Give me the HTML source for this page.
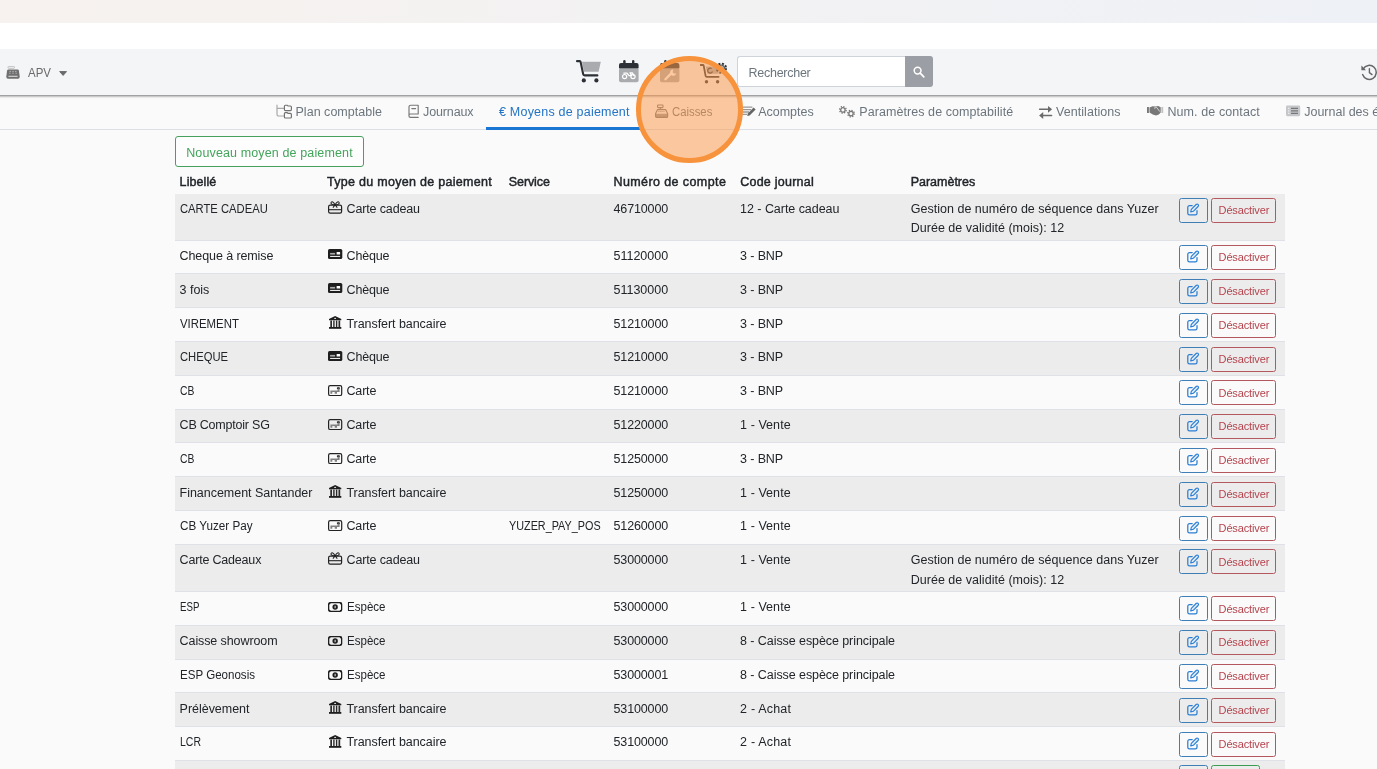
<!DOCTYPE html>
<html lang="fr">
<head>
<meta charset="utf-8">
<title>Moyens de paiement</title>
<style>
*{box-sizing:border-box;margin:0;padding:0}
html,body{width:1377px;height:769px;overflow:hidden}
body{position:relative;will-change:opacity;background:#fafafa;font-family:"Liberation Sans",Arial,sans-serif;font-size:12.5px;color:#212529;line-height:19.5px}
.abs{position:absolute}
#topstrip{position:absolute;left:0;top:0;width:1377px;height:23px;background:linear-gradient(90deg,#f7f2ef 0%,#f3f2f2 45%,#eef1f6 100%)}
#white{position:absolute;left:0;top:23px;width:1377px;height:26px;background:#fff;z-index:3}
#nav{position:absolute;left:-20px;top:49px;width:1417px;height:46px;background:rgba(244,245,247,.996);box-shadow:0 1px 2.5px rgba(0,0,0,.55);z-index:2}
#tabs{position:absolute;left:0;top:96px;width:1377px;height:34px;border-bottom:1px solid #dcdfe6}
.tab{position:absolute;top:6.8px;height:19.5px;white-space:nowrap;color:#6c757d;font-size:12.5px}
.tab svg{position:absolute;top:0;left:0;overflow:visible}
.t{display:inline-block;white-space:nowrap;transform-origin:0 50%}
#newbtn{position:absolute;left:175px;top:136px;width:189px;height:31px;border:1px solid #48a05f;border-radius:3px;color:#44a45c;background:rgba(252,253,252,.996);line-height:29px}
#newbtn .t{position:absolute;left:10.2px;top:1.5px}
.th{position:absolute;top:172.7px;font-weight:normal;-webkit-text-stroke:.45px #212529;white-space:nowrap;color:#212529}
.row{position:absolute;left:175px;width:1110px;border-top:1px solid #dee2e6;background-clip:padding-box}
.row.first{border-top-color:transparent}
.row.odd{background-color:rgba(236,236,236,.996)}
.c{position:absolute;top:6.4px;white-space:nowrap}
.first .c{top:5.8px}.first .be,.first .bd{top:3.9px}
.c1{left:4.6px}.c2{left:152px}.c3{left:333.7px}.c4{left:438.5px}.c5{left:565.1px}.c6{left:735.7px}
.c2 .t{position:absolute;left:19.5px;top:0}
.ti{position:absolute;left:.9px;top:2px;width:16px;height:16px;overflow:visible}
.ti-gift{top:1.1px}.ti-cheque{top:2.4px}.ti-bank{top:1.8px;left:1.8px}.ti-card{top:3px}.ti-cash{top:3.8px}
.be{position:absolute;left:1004px;top:4.5px;width:29px;height:25px;border:1px solid #3f7fb6;border-radius:2.5px}
.be svg{position:absolute;left:7.2px;top:5.2px;width:12px;height:12px;overflow:visible}
.bd{position:absolute;left:1036.2px;top:4.5px;width:64.8px;height:25px;border:1px solid #b4585f;border-radius:2.5px;color:#b5434d;font-size:11px;line-height:23px}
.bd .t{position:absolute;left:6.4px;top:0.3px}
.ba{position:absolute;left:1036.2px;top:4.5px;width:48.5px;height:25px;border:1px solid #3b9b52;border-radius:2.5px;color:#36a04f;font-size:11.3px;line-height:23px}
.ba .t{position:absolute;left:6.8px;top:0.3px}
#circle{z-index:5;position:absolute;left:636px;top:56px;width:106.6px;height:106.6px;border-radius:50%;background:rgba(252,152,72,.52);border:5px solid #f7933c}
</style>
</head>
<body>
<svg width="0" height="0" style="position:absolute">
<defs>
<symbol id="i-gift" viewBox="0 0 16 16" overflow="visible">
 <rect x="0.6" y="4.1" width="13" height="8" rx="1.6" fill="none" stroke="#222" stroke-width="1.2"/>
 <path d="M0.6 8.7H13.6" stroke="#222" stroke-width="1.1" fill="none"/>
 <path d="M7.1 3.9C5.8 .6 3.4 -.1 3 1.8C2.8 3.2 4.6 3.9 7.1 3.9C9.6 3.9 11.4 3.2 11.2 1.8C10.8 -.1 8.4 .6 7.1 3.9ZM7.1 3.9L4.9 6.6M7.1 3.9L9.3 6.6" stroke="#222" stroke-width="1.05" fill="none" stroke-linejoin="round"/>
</symbol>
<symbol id="i-cheque" viewBox="0 0 16 16" overflow="visible">
 <rect x="0" y="0" width="14.3" height="10" rx="1.6" fill="#1e1e1e"/>
 <rect x="8.6" y="2.9" width="3.5" height="2.7" rx=".4" fill="#fff"/>
 <rect x="2.1" y="3.9" width="5" height="1.7" fill="#aaa"/>
 <rect x="2.1" y="6.9" width="10" height="1" fill="#fff"/>
</symbol>
<symbol id="i-bank" viewBox="0 0 16 16" overflow="visible">
 <path d="M6.1 0L12.3 3.1V4.2H0V3.1Z" fill="#1e1e1e"/>
 <ellipse cx="6.1" cy="2.4" rx="1" ry=".6" fill="#ddd"/>
 <path d="M1.3 4.5h1.7v6.6H1.3zM4.2 4.5h1.4v6.6H4.2zM6.9 4.5h1.4v6.6H6.9zM9.5 4.5h1.7v6.6H9.5z" fill="#2a2a2a"/>
 <rect x="0" y="11" width="12.3" height="1.8" fill="#1e1e1e"/>
</symbol>
<symbol id="i-card" viewBox="0 0 16 16" overflow="visible">
 <rect x=".6" y=".6" width="13.1" height="9.9" rx="1.6" fill="none" stroke="#222" stroke-width="1.2"/>
 <rect x="8.9" y="2.3" width="3" height="2" rx=".8" fill="#222"/>
 <path d="M2.4 5.4H9.6V3.5H11.6V6.9H9V8.7H6.7V6.9H4.3V8.7H2.4Z" fill="#808080"/>
</symbol>
<symbol id="i-cash" viewBox="0 0 16 16" overflow="visible">
 <rect x=".65" y=".65" width="13" height="8.7" rx="1.5" fill="none" stroke="#1e1e1e" stroke-width="1.3"/>
 <path d="M.7 2.6A2 2 0 0 0 2.7.7H.7zM13.6 2.6A2 2 0 0 1 11.6.7H13.6zM.7 7.4A2 2 0 0 1 2.7 9.3H.7zM13.6 7.4A2 2 0 0 0 11.6 9.3H13.6z" fill="#1e1e1e"/>
 <circle cx="7.15" cy="5" r="2.7" fill="#1e1e1e"/>
 <rect x="6.5" y="3.8" width="1.3" height="2.4" fill="#bbb"/>
</symbol>
<symbol id="i-edit" viewBox="0 0 12 12" overflow="visible">
 <path d="M5.2 1.6H2.4A1.6 1.6 0 0 0 .8 3.2V9.2A1.6 1.6 0 0 0 2.4 10.8H8.4A1.6 1.6 0 0 0 10 9.2V6.6" fill="none" stroke="#2b7ed3" stroke-width="1.25" stroke-linecap="round"/>
 <path d="M9.1.5L4.3 5.3L3.7 7.9L6.3 7.3L11.1 2.5A1.4 1.4 0 0 0 9.1.5Z" fill="#dcebfa" stroke="#2b7ed3" stroke-width="1.1" stroke-linejoin="round"/>
</symbol>
</defs>
</svg>
<div id="topstrip"></div>
<div id="white"></div>
<div id="tabs">
 <div class="tab" style="left:276px;padding-left:19.5px"><svg width="17" height="16" viewBox="0 0 17 16" style="top:1px"><path d="M1 1.2V10.4A1.6 1.6 0 0 0 2.6 12H7.6M1 4.4H7.6" fill="none" stroke="#a8a8a8" stroke-width="1.2" stroke-linecap="round"/><path d="M8.4 2.2A1 1 0 0 1 9.4 1.2H11.2L12 2H14.4A1 1 0 0 1 15.4 3V5.6A1 1 0 0 1 14.4 6.6H9.4A1 1 0 0 1 8.4 5.6Z" fill="none" stroke="#707070" stroke-width="1.15"/><path d="M8.4 9.6A1 1 0 0 1 9.4 8.6H11.2L12 9.4H14.4A1 1 0 0 1 15.4 10.4V13A1 1 0 0 1 14.4 14H9.4A1 1 0 0 1 8.4 13Z" fill="none" stroke="#707070" stroke-width="1.15"/></svg><span class="t" style="letter-spacing:0.023px">Plan comptable</span></div>
 <div class="tab" style="left:408px;padding-left:15px"><svg width="13" height="16" viewBox="0 0 13 16" style="top:1px"><path d="M1 11.6V3A1.8 1.8 0 0 1 2.8 1.2H10.2V10H2.6A1.6 1.6 0 0 0 2.6 13.4H10.2M3.8 4.6H7.6" fill="none" stroke="#777" stroke-width="1.15" stroke-linecap="round" stroke-linejoin="round"/></svg><span class="t" style="letter-spacing:-0.117px">Journaux</span></div>
 <div class="tab" style="left:499px;color:#2374c6"><span class="t" style="letter-spacing:0.212px">€ Moyens de paiement</span></div>
 <div class="tab" style="left:654.7px;padding-left:17.2px"><svg width="15" height="16" viewBox="0 0 15 16" style="top:1px"><rect x="2.6" y="1" width="5.4" height="2.6" rx=".6" fill="none" stroke="#777" stroke-width="1.1"/><path d="M5.3 3.6V5.4" stroke="#777" stroke-width="1.1"/><path d="M2.6 5.6H10.6L12.6 9.6V12.4A1 1 0 0 1 11.6 13.4H1.6A1 1 0 0 1 .6 12.4V9.6Z" fill="none" stroke="#777" stroke-width="1.15" stroke-linejoin="round"/><path d="M.8 9.8H12.4V12.4A.8.8 0 0 1 11.6 13.2H1.6A.8.8 0 0 1 .8 12.4Z" fill="#777" opacity=".75"/><path d="M3.4 7.6H9.8" stroke="#777" stroke-width="1" stroke-dasharray="1 1"/></svg><span class="t" style="transform:scaleX(0.9063)">Caisses</span></div>
 <div class="tab" style="left:741px;padding-left:17.2px"><svg width="16" height="16" viewBox="0 0 16 16" style="top:1px"><path d="M1 3.2H11.4M1 5.6H10M1 8H8M1 10.4H6" stroke="#999" stroke-width="1.3" fill="none"/><path d="M12.6 3.4L14.6 5.4L8.6 11.4L6.2 12L6.8 9.4Z" fill="#666"/></svg><span class="t" style="letter-spacing:-0.012px">Acomptes</span></div>
 <div class="tab" style="left:839px;padding-left:20.3px"><svg width="17" height="16" viewBox="0 0 17 16" style="top:0px"><circle cx="3.9" cy="6.9" r="3.3" fill="none" stroke="#777" stroke-width="1.3" stroke-dasharray="1.3 1.29"/><circle cx="3.9" cy="6.9" r="2.2" fill="none" stroke="#777" stroke-width="1.3"/><circle cx="12" cy="10.6" r="3.3" fill="none" stroke="#777" stroke-width="1.3" stroke-dasharray="1.3 1.29"/><circle cx="12" cy="10.6" r="2.2" fill="none" stroke="#777" stroke-width="1.3"/></svg><span class="t" style="letter-spacing:0.067px">Paramètres de comptabilité</span></div>
 <div class="tab" style="left:1038.8px;padding-left:17.2px"><svg width="14" height="16" viewBox="0 0 14 16" style="top:1px"><path d="M.6 5.3H9.6M12.6 11.5H3.6" fill="none" stroke="#6b6b6b" stroke-width="1.5" stroke-linecap="round"/><path d="M9 1.9L13.1 5.3L9 8.7ZM4.2 8.1L.1 11.5L4.2 14.9Z" fill="#6b6b6b"/></svg><span class="t" style="letter-spacing:0.064px">Ventilations</span></div>
 <div class="tab" style="left:1146.9px;padding-left:20.5px"><svg width="17" height="16" viewBox="0 0 17 16" style="top:1px"><rect x="0" y="3" width="1.9" height="6" fill="#777"/><rect x="14.3" y="3" width="1.9" height="6" fill="#c2c2c2"/><path d="M2.5 3.4L5.6 2.2L8.4 2.4L11.2 2L13.7 3.2V8.4L11.8 10.4L9 11.4L5.8 10.6L2.5 8.4Z" fill="#777"/><path d="M7 4.2L9.6 3.4L12.8 7.6" stroke="#ddd" stroke-width=".9" fill="none"/></svg><span class="t" style="letter-spacing:0.099px">Num. de contact</span></div>
 <div class="tab" style="left:1286px;padding-left:18.2px"><svg width="15" height="16" viewBox="0 0 15 16" style="top:1px"><rect x="0" y="1.6" width="14.2" height="10.6" rx="1.4" fill="#c4c6c9"/><path d="M2 4.4H3.4M2 6.9H3.4M2 9.4H3.4" stroke="#eee" stroke-width="1.2"/><path d="M5 4.4H12M5 6.9H12M5 9.4H12" stroke="#777" stroke-width="1.2"/></svg><span class="t">Journal des écritures</span></div>
 <div style="position:absolute;left:486px;top:31px;width:156px;height:3.4px;background:#1976d2"></div>
</div>
<div id="nav">
 <svg class="abs" style="left:26.0px;top:17px" width="14" height="13" viewBox="0 0 14 13"><rect x="2" y=".4" width="6.4" height="1.9" rx=".6" fill="none" stroke="#b5b5b5" stroke-width=".8"/><path d="M2.4 3.4H11.6Q12.6 3.4 12.9 4.4L13.7 10.8Q13.8 12.8 12 12.8H2Q.2 12.8 .3 10.8L1.1 4.4Q1.4 3.4 2.4 3.4Z" fill="#6f6f6f"/><path d="M3.6 5.4H4.8M6.4 5.4H7.6M9.2 5.4H10.4M3.3 7.2H4.5M6.4 7.2H7.6M9.5 7.2H10.7" stroke="#c9c9c9" stroke-width=".9"/><path d="M2.4 10.3H11.6" stroke="#d8d8d8" stroke-width="1.1"/></svg>
 <div class="abs" style="left:48.0px;top:15.1px;color:#6a6a6a;font-size:12.5px;white-space:nowrap"><span class="t" style="transform:scaleX(0.9194)">APV</span></div>
 <svg class="abs" style="left:79.0px;top:21.5px" width="9" height="6" viewBox="0 0 9 6"><path d="M.7.6H7.5L4.1 4.4Z" fill="#6a6a6a" stroke="#6a6a6a" stroke-width="1" stroke-linejoin="round"/></svg>
 <!-- cart -->
 <svg class="abs" style="left:596.0px;top:10.6px" width="26" height="23" viewBox="0 0 26 23"><path d="M6 1.8H24.8L22.6 11.8H8Z" fill="#a9abae"/><path d="M1 1.1H3.6A1 1 0 0 1 4.6 1.9L7.2 14.2A1.4 1.4 0 0 0 8.6 15.4H21.4" fill="none" stroke="#2c3036" stroke-width="2.1" stroke-linecap="round" stroke-linejoin="round"/><circle cx="7.8" cy="20.4" r="2.1" fill="#2c3036"/><circle cx="20.4" cy="20.4" r="2.1" fill="#2c3036"/></svg>
 <!-- calendar moto -->
 <svg class="abs" style="left:639.0px;top:10.8px" width="20" height="23" viewBox="0 0 20 23"><rect x="0" y="7.8" width="19.6" height="14.4" rx="2" fill="#a9abae"/><path d="M2 3H17.6A2 2 0 0 1 19.6 5V8.2H0V5A2 2 0 0 1 2 3Z" fill="#2c3036"/><rect x="4.2" y="0" width="2.4" height="5" rx="1.2" fill="#2c3036"/><rect x="13" y="0" width="2.4" height="5" rx="1.2" fill="#2c3036"/><circle cx="5.6" cy="16.6" r="2.1" fill="none" stroke="#fff" stroke-width="1.2"/><circle cx="14" cy="16.6" r="2.1" fill="none" stroke="#fff" stroke-width="1.2"/><path d="M4.4 13.2H8L10 15.6H12.6L11 12.8H13.4L15 16" fill="none" stroke="#fff" stroke-width="1.3" stroke-linejoin="round"/></svg>
 <!-- calendar wrench -->
 <svg class="abs" style="left:680.2px;top:10.8px" width="20" height="23" viewBox="0 0 20 23"><rect x="0" y="7.8" width="19.4" height="14.4" rx="2" fill="#a9abae"/><path d="M2 3H17.4A2 2 0 0 1 19.4 5V8.2H0V5A2 2 0 0 1 2 3Z" fill="#2c3036"/><rect x="4.2" y="0" width="2.4" height="5" rx="1.2" fill="#2c3036"/><rect x="12.8" y="0" width="2.4" height="5" rx="1.2" fill="#2c3036"/><path d="M5.4 19.2L11 13.6" stroke="#fff" stroke-width="2.3" stroke-linecap="round"/><path d="M13.4 9.6A3.1 3.1 0 1 0 16.2 13.4L14 13.6L12.6 12.2Z" fill="#fff"/></svg>
 <!-- cart gear -->
 <svg class="abs" style="left:720.0px;top:13px" width="28" height="22" viewBox="0 0 28 22"><path d="M5.8 4.4H19.8L18.4 11.8H7.4Z" fill="#a9abae"/><path d="M.7 3H2.8A.9.9 0 0 1 3.7 3.7L5.6 13.8A1.2 1.2 0 0 0 6.8 14.8H18.6" fill="none" stroke="#2c3036" stroke-width="1.8" stroke-linecap="round" stroke-linejoin="round"/><circle cx="6.5" cy="19.8" r="1.7" fill="#2c3036"/><circle cx="17.6" cy="19.8" r="1.7" fill="#2c3036"/><circle cx="10.2" cy="8.6" r="2.5" fill="none" stroke="#2c3036" stroke-width="1.2" stroke-dasharray="12 2.4" stroke-dashoffset="-1"/><circle cx="21.4" cy="6.2" r="4.6" fill="none" stroke="#2c3036" stroke-width="2" stroke-dasharray="2 1.61"/><circle cx="21.4" cy="6.2" r="3.2" fill="#a9abae" stroke="#2c3036" stroke-width=".8"/></svg>
 <!-- search -->
 <div class="abs" style="left:757.3px;top:7.3px;width:168.4px;height:30.4px;background:rgba(255,255,255,.996);border:1px solid #ced4da;border-right:0;border-radius:3px 0 0 3px"></div>
 <div class="abs" style="left:768.5px;top:15.4px;color:#6c757d;white-space:nowrap"><span class="t" style="letter-spacing:-0.263px">Rechercher</span></div>
 <div class="abs" style="left:925.3px;top:7.3px;width:27.3px;height:30.4px;background:#9b9ea4;border-radius:0 3px 3px 0"></div>
 <svg class="abs" style="left:933.2px;top:17px" width="12" height="12" viewBox="0 0 12 12"><circle cx="4.6" cy="4.6" r="3.4" fill="none" stroke="#fff" stroke-width="1.5"/><path d="M7.2 7.2L10.8 10.8" stroke="#fff" stroke-width="1.7" stroke-linecap="round"/></svg>
 <!-- history -->
 <svg class="abs" style="left:1380.6px;top:14.6px" width="18" height="18" viewBox="0 0 18 18"><path d="M2.2 4.8A7 7 0 1 1 1.6 10.6" fill="none" stroke="#666" stroke-width="1.5" stroke-linecap="round"/><path d="M.4 1.6V6.2H5Z" fill="#666"/><path d="M8.4 4.6V8.6L11 10.6" fill="none" stroke="#666" stroke-width="1.4" stroke-linecap="round"/></svg>
</div>
<div id="newbtn"><span class="t" style="letter-spacing:0.131px">Nouveau moyen de paiement</span></div>
<div class="th" style="left:179.6px"><span class="t" style="letter-spacing:0.080px">Libellé</span></div>
<div class="th" style="left:327px"><span class="t" style="letter-spacing:0.290px">Type du moyen de paiement</span></div>
<div class="th" style="left:508.8px"><span class="t" style="letter-spacing:-0.098px">Service</span></div>
<div class="th" style="left:613.5px"><span class="t" style="letter-spacing:0.405px">Numéro de compte</span></div>
<div class="th" style="left:740.2px"><span class="t" style="letter-spacing:0.242px">Code journal</span></div>
<div class="th" style="left:910.7px"><span class="t" style="letter-spacing:-0.011px">Paramètres</span></div>
<div class="row odd first" style="top:193.10px;height:47.00px"><div class="c c1"><span class="t" style="transform:scaleX(0.8985)">CARTE CADEAU</span></div><div class="c c2"><svg class="ti ti-gift"><use href="#i-gift"/></svg><span class="t" style="letter-spacing:-0.139px">Carte cadeau</span></div><div class="c c4"><span class="t" style="letter-spacing:-0.128px">46710000</span></div><div class="c c5"><span class="t" style="letter-spacing:-0.045px">12 - Carte cadeau</span></div><div class="c c6"><span class="t" style="letter-spacing:0.023px">Gestion de numéro de séquence dans Yuzer</span><br><span class="t" style="letter-spacing:0.026px">Durée de validité (mois): 12</span></div><div class="be"><svg><use href="#i-edit"/></svg></div><div class="bd"><span class="t" style="letter-spacing:-0.137px">Désactiver</span></div></div>
<div class="row" style="top:239.60px;height:34.30px"><div class="c c1"><span class="t" style="letter-spacing:-0.100px">Cheque à remise</span></div><div class="c c2"><svg class="ti ti-cheque"><use href="#i-cheque"/></svg><span class="t" style="letter-spacing:-0.149px">Chèque</span></div><div class="c c4"><span class="t" style="letter-spacing:-0.011px">51120000</span></div><div class="c c5"><span class="t" style="letter-spacing:-0.124px">3 - BNP</span></div><div class="be"><svg><use href="#i-edit"/></svg></div><div class="bd"><span class="t" style="letter-spacing:-0.137px">Désactiver</span></div></div>
<div class="row odd" style="top:273.40px;height:34.30px"><div class="c c1"><span class="t" style="letter-spacing:-0.032px">3 fois</span></div><div class="c c2"><svg class="ti ti-cheque"><use href="#i-cheque"/></svg><span class="t" style="letter-spacing:-0.149px">Chèque</span></div><div class="c c4"><span class="t" style="letter-spacing:-0.011px">51130000</span></div><div class="c c5"><span class="t" style="letter-spacing:-0.124px">3 - BNP</span></div><div class="be"><svg><use href="#i-edit"/></svg></div><div class="bd"><span class="t" style="letter-spacing:-0.137px">Désactiver</span></div></div>
<div class="row" style="top:307.20px;height:34.30px"><div class="c c1"><span class="t" style="transform:scaleX(0.9119)">VIREMENT</span></div><div class="c c2"><svg class="ti ti-bank"><use href="#i-bank"/></svg><span class="t" style="letter-spacing:-0.060px">Transfert bancaire</span></div><div class="c c4"><span class="t" style="letter-spacing:-0.128px">51210000</span></div><div class="c c5"><span class="t" style="letter-spacing:-0.124px">3 - BNP</span></div><div class="be"><svg><use href="#i-edit"/></svg></div><div class="bd"><span class="t" style="letter-spacing:-0.137px">Désactiver</span></div></div>
<div class="row odd" style="top:341.00px;height:34.30px"><div class="c c1"><span class="t" style="transform:scaleX(0.8975)">CHEQUE</span></div><div class="c c2"><svg class="ti ti-cheque"><use href="#i-cheque"/></svg><span class="t" style="letter-spacing:-0.149px">Chèque</span></div><div class="c c4"><span class="t" style="letter-spacing:-0.128px">51210000</span></div><div class="c c5"><span class="t" style="letter-spacing:-0.124px">3 - BNP</span></div><div class="be"><svg><use href="#i-edit"/></svg></div><div class="bd"><span class="t" style="letter-spacing:-0.137px">Désactiver</span></div></div>
<div class="row" style="top:374.80px;height:34.30px"><div class="c c1"><span class="t" style="transform:scaleX(0.8288)">CB</span></div><div class="c c2"><svg class="ti ti-card"><use href="#i-card"/></svg><span class="t" style="letter-spacing:-0.176px">Carte</span></div><div class="c c4"><span class="t" style="letter-spacing:-0.128px">51210000</span></div><div class="c c5"><span class="t" style="letter-spacing:-0.124px">3 - BNP</span></div><div class="be"><svg><use href="#i-edit"/></svg></div><div class="bd"><span class="t" style="letter-spacing:-0.137px">Désactiver</span></div></div>
<div class="row odd" style="top:408.60px;height:34.30px"><div class="c c1"><span class="t" style="letter-spacing:-0.214px">CB Comptoir SG</span></div><div class="c c2"><svg class="ti ti-card"><use href="#i-card"/></svg><span class="t" style="letter-spacing:-0.176px">Carte</span></div><div class="c c4"><span class="t" style="letter-spacing:-0.128px">51220000</span></div><div class="c c5"><span class="t" style="letter-spacing:0.061px">1 - Vente</span></div><div class="be"><svg><use href="#i-edit"/></svg></div><div class="bd"><span class="t" style="letter-spacing:-0.137px">Désactiver</span></div></div>
<div class="row" style="top:442.40px;height:34.30px"><div class="c c1"><span class="t" style="transform:scaleX(0.8288)">CB</span></div><div class="c c2"><svg class="ti ti-card"><use href="#i-card"/></svg><span class="t" style="letter-spacing:-0.176px">Carte</span></div><div class="c c4"><span class="t" style="letter-spacing:-0.128px">51250000</span></div><div class="c c5"><span class="t" style="letter-spacing:-0.124px">3 - BNP</span></div><div class="be"><svg><use href="#i-edit"/></svg></div><div class="bd"><span class="t" style="letter-spacing:-0.137px">Désactiver</span></div></div>
<div class="row odd" style="top:476.20px;height:34.30px"><div class="c c1"><span class="t" style="letter-spacing:-0.030px">Financement Santander</span></div><div class="c c2"><svg class="ti ti-bank"><use href="#i-bank"/></svg><span class="t" style="letter-spacing:-0.060px">Transfert bancaire</span></div><div class="c c4"><span class="t" style="letter-spacing:-0.128px">51250000</span></div><div class="c c5"><span class="t" style="letter-spacing:0.061px">1 - Vente</span></div><div class="be"><svg><use href="#i-edit"/></svg></div><div class="bd"><span class="t" style="letter-spacing:-0.137px">Désactiver</span></div></div>
<div class="row" style="top:510.00px;height:34.30px"><div class="c c1"><span class="t" style="transform:scaleX(0.9356)">CB Yuzer Pay</span></div><div class="c c2"><svg class="ti ti-card"><use href="#i-card"/></svg><span class="t" style="letter-spacing:-0.176px">Carte</span></div><div class="c c3"><span class="t" style="transform:scaleX(0.8656)">YUZER_PAY_POS</span></div><div class="c c4"><span class="t" style="letter-spacing:-0.128px">51260000</span></div><div class="c c5"><span class="t" style="letter-spacing:0.061px">1 - Vente</span></div><div class="be"><svg><use href="#i-edit"/></svg></div><div class="bd"><span class="t" style="letter-spacing:-0.137px">Désactiver</span></div></div>
<div class="row odd" style="top:543.80px;height:47.60px"><div class="c c1"><span class="t" style="letter-spacing:-0.191px">Carte Cadeaux</span></div><div class="c c2"><svg class="ti ti-gift"><use href="#i-gift"/></svg><span class="t" style="letter-spacing:-0.139px">Carte cadeau</span></div><div class="c c4"><span class="t" style="letter-spacing:-0.128px">53000000</span></div><div class="c c5"><span class="t" style="letter-spacing:0.061px">1 - Vente</span></div><div class="c c6"><span class="t" style="letter-spacing:0.023px">Gestion de numéro de séquence dans Yuzer</span><br><span class="t" style="letter-spacing:0.026px">Durée de validité (mois): 12</span></div><div class="be"><svg><use href="#i-edit"/></svg></div><div class="bd"><span class="t" style="letter-spacing:-0.137px">Désactiver</span></div></div>
<div class="row" style="top:590.90px;height:34.30px"><div class="c c1"><span class="t" style="transform:scaleX(0.7755)">ESP</span></div><div class="c c2"><svg class="ti ti-cash"><use href="#i-cash"/></svg><span class="t" style="transform:scaleX(0.9232)">Espèce</span></div><div class="c c4"><span class="t" style="letter-spacing:-0.128px">53000000</span></div><div class="c c5"><span class="t" style="letter-spacing:0.061px">1 - Vente</span></div><div class="be"><svg><use href="#i-edit"/></svg></div><div class="bd"><span class="t" style="letter-spacing:-0.137px">Désactiver</span></div></div>
<div class="row odd" style="top:624.70px;height:34.30px"><div class="c c1"><span class="t" style="letter-spacing:-0.096px">Caisse showroom</span></div><div class="c c2"><svg class="ti ti-cash"><use href="#i-cash"/></svg><span class="t" style="transform:scaleX(0.9232)">Espèce</span></div><div class="c c4"><span class="t" style="letter-spacing:-0.128px">53000000</span></div><div class="c c5"><span class="t" style="letter-spacing:-0.076px">8 - Caisse espèce principale</span></div><div class="be"><svg><use href="#i-edit"/></svg></div><div class="bd"><span class="t" style="letter-spacing:-0.137px">Désactiver</span></div></div>
<div class="row" style="top:658.50px;height:34.30px"><div class="c c1"><span class="t" style="transform:scaleX(0.9250)">ESP Geonosis</span></div><div class="c c2"><svg class="ti ti-cash"><use href="#i-cash"/></svg><span class="t" style="transform:scaleX(0.9232)">Espèce</span></div><div class="c c4"><span class="t" style="letter-spacing:-0.128px">53000001</span></div><div class="c c5"><span class="t" style="letter-spacing:-0.076px">8 - Caisse espèce principale</span></div><div class="be"><svg><use href="#i-edit"/></svg></div><div class="bd"><span class="t" style="letter-spacing:-0.137px">Désactiver</span></div></div>
<div class="row odd" style="top:692.30px;height:34.30px"><div class="c c1"><span class="t" style="letter-spacing:-0.026px">Prélèvement</span></div><div class="c c2"><svg class="ti ti-bank"><use href="#i-bank"/></svg><span class="t" style="letter-spacing:-0.060px">Transfert bancaire</span></div><div class="c c4"><span class="t" style="letter-spacing:-0.128px">53100000</span></div><div class="c c5"><span class="t" style="letter-spacing:0.184px">2 - Achat</span></div><div class="be"><svg><use href="#i-edit"/></svg></div><div class="bd"><span class="t" style="letter-spacing:-0.137px">Désactiver</span></div></div>
<div class="row" style="top:726.10px;height:34.30px"><div class="c c1"><span class="t" style="transform:scaleX(0.8395)">LCR</span></div><div class="c c2"><svg class="ti ti-bank"><use href="#i-bank"/></svg><span class="t" style="letter-spacing:-0.060px">Transfert bancaire</span></div><div class="c c4"><span class="t" style="letter-spacing:-0.128px">53100000</span></div><div class="c c5"><span class="t" style="letter-spacing:0.184px">2 - Achat</span></div><div class="be"><svg><use href="#i-edit"/></svg></div><div class="bd"><span class="t" style="letter-spacing:-0.137px">Désactiver</span></div></div>
<div class="row odd" style="top:759.90px;height:33.8px"><div class="be"><svg><use href="#i-edit"/></svg></div><div class="ba"><span class="t">Activer</span></div></div>
<div id="circle"></div>
</body>
</html>
